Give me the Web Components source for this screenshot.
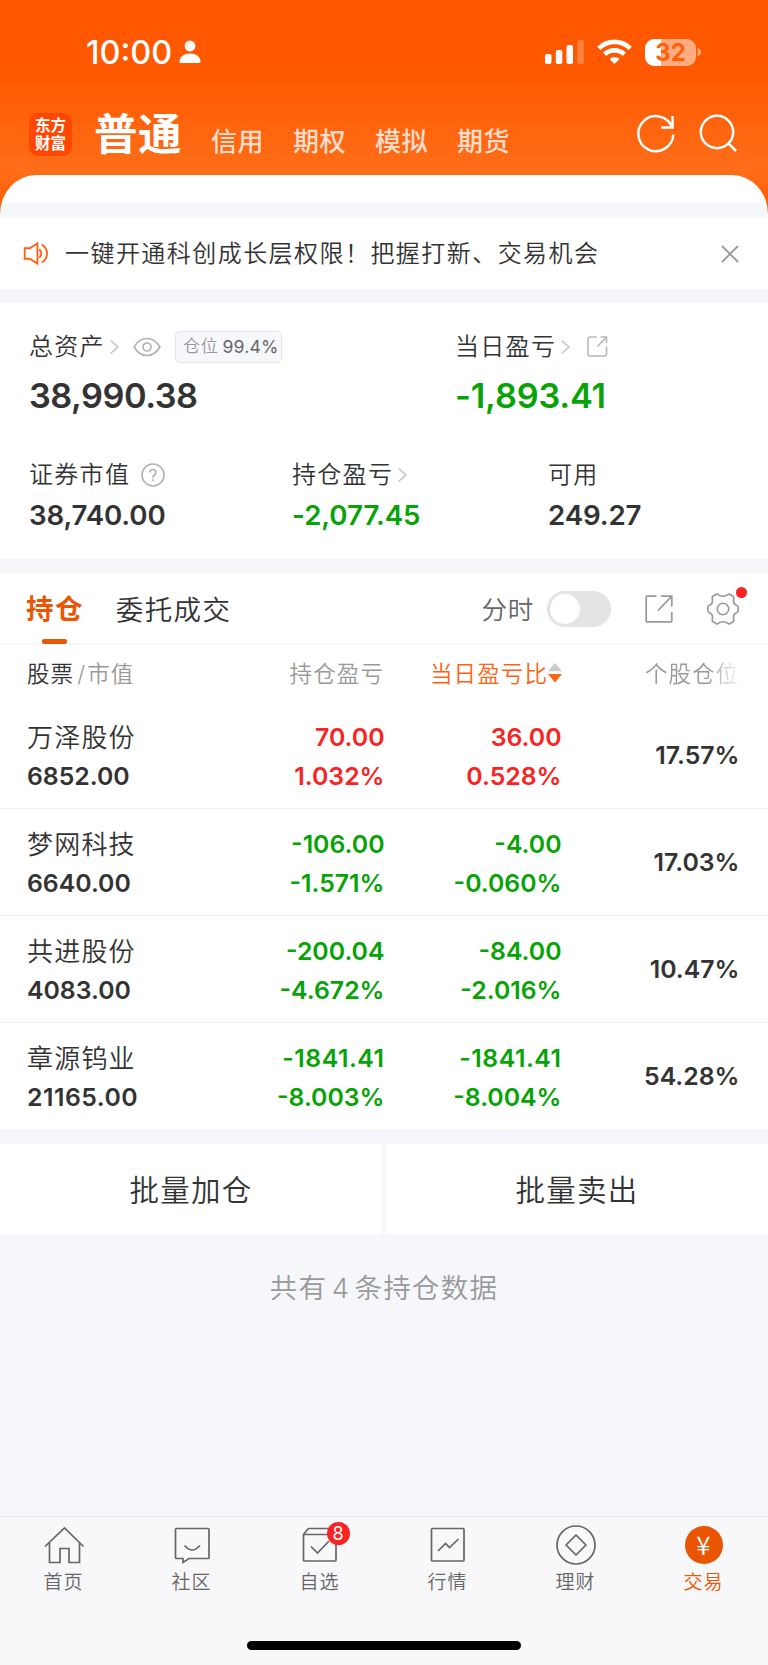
<!DOCTYPE html>
<html lang="zh-CN">
<head>
<meta charset="UTF-8">
<title>交易</title>
<style>
	:root {
		--brand: #ea5504;
		--ink: #333;
		--muted: #999;
		--up: #f82323;
		--down: #07a307;
		--gap: #f6f7fa;
	}
	body {
		margin: 0;
		width: 768px;
		height: 1665px;
		overflow: hidden;
		background: var(--gap);
		color: var(--ink);
		font-family: Inter, "Noto Sans CJK SC", sans-serif;
		font-weight: 350;
		white-space: nowrap;
	}
</style>
</head>
<body>
<trade-app></trade-app>

<script>
class BaseElement extends HTMLElement {
	constructor() {
		super();
		this.attachShadow({ mode: 'open' });
	}

	connectedCallback() {
		this.shadowRoot.innerHTML = `<style>* { box-sizing: border-box; } svg { display: block; flex: none; }</style>${this.render()}`;
	}
}

class StatusBar extends BaseElement {
	render() {
		return `
			<style>
				:host { display: flex; align-items: center; justify-content: space-between; height: 95px; padding: 9px 67px 0 86px; box-sizing: border-box; color: #fff; }
				.left, .right { display: flex; align-items: center; }
				.time { padding-top: 1px; font-size: 32.5px; line-height: 40px; font-weight: 500; letter-spacing: 0; width: 93px; }
				.battery { display: flex; align-items: center; justify-content: center; width: 51px; height: 27px; border-radius: 9px; margin-left: 13px;
					background: linear-gradient(90deg, #fff 16px, rgba(255, 255, 255, .5) 16px); color: #ff5f0a; font-size: 24px; line-height: 27px; font-weight: 700; }
			</style>
			<div class="left">
				<div class="time">10:00</div>
				<svg width="22" height="24" viewBox="0 0 22 24" fill="#fff"><circle cx="11" cy="6" r="5.4"/><path d="M.5 21.5C.5 17 5 13.5 11 13.5S21.500 17 21.500 21.500Q21.500 23 20 23H2Q.5 23 .5 21.500Z"/></svg>
			</div>
			<div class="right">
				<svg width="40" height="26" viewBox="0 0 40 26" fill="#fff"><rect y="15" width="6.500" height="10" rx="2"/><rect x="10.800" y="11" width="6.500" height="14" rx="2"/><rect x="21.500" y="6" width="6.500" height="19" rx="2"/><rect x="32.300" y="1" width="6.500" height="24" rx="2" opacity=".25"/></svg>
				<svg style="margin-left:12px" width="35" height="26" viewBox="0 0 35 26" fill="none" stroke="#fff" stroke-width="4.600"><path d="M1.800 9.300A22.500 22.500 0 0 1 33.200 9.300"/><path d="M7.700 15.300A14.200 14.200 0 0 1 27.300 15.300"/><path d="M17.500 25L12.500 20Q17.500 16 22.500 20Z" fill="#fff" stroke="none"/></svg>
				<div class="battery">32</div>
				<svg width="5" height="10" viewBox="0 0 5 10"><path d="M1.500 1Q5 2 5 5T1.500 9Z" fill="#fff" opacity=".5"/></svg>
			</div>
		`;
	}
}

class AccountTabs extends BaseElement {
	render() {
		return `
			<style>
				:host { display: flex; height: 80px; padding: 0 30px 0 29px; box-sizing: border-box; color: #fff; }
				.logo { width: 43px; height: 43px; margin-top: 18px; border-radius: 9px; background: #ff4703; display: grid; place-content: center; text-align: center; font-size: 15.5px; line-height: 17.500px; font-weight: 700; }
				.on { margin: 9px 0 0 22px; width: 117px; font-size: 43.5px; line-height: 60px; font-weight: 700; letter-spacing: .5px; }
				.tab { width: 82px; margin-top: 26px; font-size: 26px; line-height: 41px; font-weight: 500; letter-spacing: .5px; color: rgba(255, 255, 255, .8); }
				.icons { display: flex; gap: 22px; margin: 19px 0 0 auto; }
			</style>
			<div class="logo"><span>东方</span><span>财富</span></div>
			<div class="on">普通</div>
			${['信用', '期权', '模拟', '期货'].map((t) => `<div class="tab">${t}</div>`).join('')}
			<div class="icons">
				<svg width="40" height="40" viewBox="0 0 40 40" fill="none" stroke="#fff" stroke-width="2.500"><path d="M37.300 20.500A17.500 17.500 0 1 1 36.200 13.500"/><path d="M36.500 2V13.500H25"/></svg>
				<svg width="40" height="40" viewBox="0 0 40 40" fill="none" stroke="#fff" stroke-width="2.500"><circle cx="19" cy="18" r="16.200"/><path d="M30 29L38 37"/></svg>
			</div>
		`;
	}
}

class NoticeBar extends BaseElement {
	render() {
		return `
			<style>
				:host { display: flex; align-items: center; height: 71px; padding: 0 29px 0 23px; background: #fff; box-sizing: border-box; font-size: 24px; }
				.text { flex: 1; margin-left: 16px; letter-spacing: 1.45px; line-height: 36px; }
			</style>
			<svg width="26" height="23" viewBox="0 0 26 24" fill="none" stroke="#ff5f14" stroke-width="1.900"><path d="M1.200 6.500H6.500L14.500 1.500V22.500L6.500 17.500H1.200Z"/><path d="M16.500 7.500Q20.500 12 16.500 16.500M19 2.500Q24.500 6 24.500 12T19 21.500"/></svg>
			<div class="text"><slot></slot></div>
			<svg width="18" height="18" viewBox="0 0 18 18" stroke="#999" stroke-width="1.800"><path d="M1 1L17 17M17 1L1 17"/></svg>
		`;
	}
}

class AssetItem extends BaseElement {
	render() {
		const arrow = this.hasAttribute('arrow')
			? '<svg width="11" height="16" viewBox="0 0 11 16" fill="none" stroke="#c4c4c4" stroke-width="1.500"><path d="M1.500 1.500L9 8L1.500 14.500"/></svg>'
			: '';
		return `
			<style>
				:host { display: block; }
				.label { display: flex; align-items: center; height: 37px; font-size: 24px; line-height: 35px; letter-spacing: 1.300px; }
				.label svg { margin-left: 4px; }
				.value { font-size: 27.700px; line-height: 36px; font-weight: 600; margin-top: 4px; letter-spacing: -.15px; }
				:host([down]) .value { color: var(--down); letter-spacing: -.05px; }
				:host([large]) .value { font-size: 34.300px; line-height: 44px; margin-top: 9px; letter-spacing: -.5px; }
				:host([large][down]) .value { letter-spacing: -.2px; }
			</style>
			<div class="label"><span>${this.getAttribute('label')}</span>${arrow}<slot></slot></div>
			<div class="value">${this.getAttribute('value')}</div>
		`;
	}
}

class AssetSummary extends BaseElement {
	render() {
		return `
			<style>
				:host { display: block; height: 256px; padding: 25px 29px 0; background: #fff; box-sizing: border-box; }
				.top { display: grid; grid-template-columns: 426px 1fr; height: 128px; }
				.bottom { display: grid; grid-template-columns: 263px 256px 1fr; }
				.tag { display: flex; align-items: center; gap: 4px; margin-left: 14px; height: 32px; width: 107px; padding-left: 7px; border: 1px solid #e4e5e8; border-radius: 5px; background: #f7f8fb; font-size: 17px; letter-spacing: .8px; color: #999; }
				.tag b { font-weight: 400; font-size: 17.700px; letter-spacing: .1px; color: #666; }
			</style>
			<div class="top">
				<asset-item large arrow label="总资产" value="38,990.38">
					<svg style="margin-left:13px" width="28" height="20" viewBox="0 0 28 20" fill="none" stroke="#b2b2b2" stroke-width="1.700"><path d="M1.200 10Q6 1.500 14 1.500T26.800 10Q22 18.500 14 18.500T1.200 10Z"/><circle cx="14" cy="10" r="4"/></svg>
					<div class="tag">仓位<b>99.4%</b></div>
				</asset-item>
				<asset-item large arrow down label="当日盈亏" value="-1,893.41">
					<svg style="margin-left:16px" width="21" height="21" viewBox="0 0 21 21" fill="none" stroke="#b8b8b8" stroke-width="1.600"><path d="M10 1H3.500Q1 1 1 3.500V17.500Q1 20 3.500 20H17Q19.500 20 19.500 17.500V10.500M13.500 1H19.500V7M19.500 1L10.500 10.500"/></svg>
				</asset-item>
			</div>
			<div class="bottom">
				<asset-item label="证券市值" value="38,740.00">
					<svg style="margin-left:11px" width="24" height="24" viewBox="0 0 24 24" fill="none" stroke="#b2b2b2" stroke-width="1.600"><circle cx="12" cy="12" r="11"/><path d="M8.800 9.500Q9 6.500 12 6.500T15 9.300Q15 11 13.300 12T12 14.800"/><path d="M12 16.200V18" stroke-width="1.800"/></svg>
				</asset-item>
				<asset-item arrow down label="持仓盈亏" value="-2,077.45"></asset-item>
				<asset-item label="可用" value="249.27"></asset-item>
			</div>
		`;
	}
}

class PositionTabs extends BaseElement {
	render() {
		return `
			<style>
				:host { display: flex; align-items: center; height: 72px; padding: 0 29px 0 26px; background: #fff; border-bottom: 2px solid #f5f6f7; box-sizing: border-box; font-size: 27.500px; letter-spacing: 1.400px; }
				.on { position: relative; height: 100%; line-height: 72px; font-weight: 700; color: var(--brand); }
				.on::after { content: ""; position: absolute; left: 16px; bottom: -1px; width: 25px; height: 5px; border-radius: 2px; background: var(--brand); }
				.tab { margin-left: 32px; padding-bottom: 1px; }
				.label { margin-left: auto; padding-bottom: 2px; font-size: 25.500px; letter-spacing: .8px; color: #666; }
				.switch { width: 64px; height: 36px; margin: 0 34px 0 13px; padding: 3px; border-radius: 18px; background: #e4e4e6; }
				.switch i { display: block; width: 30px; height: 30px; border-radius: 50%; background: #fff; }
				.switch, .export, .gear { position: relative; top: .5px; }
				.gear { margin-left: 34px; }
				.gear i { position: absolute; right: -8px; top: -6px; width: 11px; height: 11px; border-radius: 50%; background: var(--up); }
			</style>
			<div class="on">持仓</div>
			<div class="tab">委托成交</div>
			<div class="label">分时</div>
			<div class="switch"><i></i></div>
			<svg class="export" width="28" height="28" viewBox="0 0 28 28" fill="none" stroke="#999" stroke-width="1.700"><path d="M11.500 1.200H2Q1.200 1.200 1.200 2V26Q1.200 26.800 2 26.800H26Q26.800 26.800 26.800 26V17M16 1.200H26.800V11.500M26.800 1.200L13 15.500"/></svg>
			<div class="gear">
				<svg width="32" height="32" viewBox="0 0 32 32" fill="none" stroke="#999" stroke-width="1.600"><path d="M9.200 1.300Q10.500 .8 11.200 1.700Q13 3.200 16 3.200T20.800 1.700Q21.500 .8 22.800 1.300L26 3.200Q27.200 4 26.700 5.500Q25.600 10.500 29.300 12.200Q31.200 12.800 31.200 14.200V17.800Q31.200 19.200 29.300 19.800Q25.600 21.500 26.700 26.500Q27.200 28 26 28.800L22.800 30.700Q21.500 31.200 20.800 30.300Q19 28.800 16 28.800T11.200 30.300Q10.500 31.200 9.200 30.700L6 28.800Q4.800 28 5.300 26.500Q6.400 21.500 2.700 19.800Q.8 19.200 .8 17.800V14.200Q.8 12.800 2.700 12.200Q6.400 10.500 5.300 5.500Q4.800 4 6 3.200Z"/><circle cx="16" cy="16" r="5.700"/></svg>
				<i></i>
			</div>
		`;
	}
}

class PositionHead extends BaseElement {
	render() {
		return `
			<style>
				:host { display: grid; grid-template-columns: 1fr 177px 177px 178px; align-items: center; height: 57px; padding: 0 29px 4px 27px; background: #fff; box-sizing: border-box; font-size: 22.500px; letter-spacing: 1.100px; color: var(--muted); text-align: right; }
				.name { text-align: left; }
				.name b { font-weight: 350; color: var(--ink); }
				.name span { margin: 0 1px 0 3px; }
				.sort { display: flex; align-items: center; justify-content: flex-end; color: #fa6414; margin-right: -1px; }
				.sort svg { margin-top: 2px; }
				.fade { margin-left: auto; -webkit-mask-image: linear-gradient(90deg, #000 65%, transparent 103%); width: 94px; overflow: hidden; text-align: left; }
			</style>
			<div class="name"><b>股票</b><span>/</span>市值</div>
			<div>持仓盈亏</div>
			<div class="sort">当日盈亏比<svg width="14" height="20" viewBox="0 0 14 20"><path d="M7 0L14 8.200H0Z" fill="#ccc"/><path d="M0 11H14L7 19.500Z" fill="#fa6414"/></svg></div>
			<div class="fade">个股仓位</div>
		`;
	}
}

class PositionRow extends BaseElement {
	render() {
		const get = (name) => this.getAttribute(name);
		return `
			<style>
				:host { display: grid; grid-template-columns: 1fr 177px 177px 178px; align-items: center; height: 107px; padding: 4px 28.500px 0 27px; background: #fff; border-bottom: 1px solid #f0f1f2; box-sizing: border-box; font-size: 24.800px; line-height: 39px; font-weight: 600; text-align: right; }
				.name { text-align: left; }
				.name p { margin: 0; font-size: 26px; font-weight: 350; letter-spacing: 1.200px; }
				.profit { color: var(--down); }
				.share { padding-bottom: 3px; }
				:host([up]) .profit { color: var(--up); }
				:host([wide]) span { letter-spacing: .5px; }
				:host(:last-of-type) { border-bottom: 0; height: 106px; }
			</style>
			<div class="name"><p>${get('name')}</p><span>${get('value')}</span></div>
			<div class="profit"><span>${get('total')}</span><br>${get('total-rate')}</div>
			<div class="profit"><span>${get('today')}</span><br>${get('today-rate')}</div>
			<div class="share">${get('share')}</div>
		`;
	}
}

class BatchActions extends BaseElement {
	render() {
		return `
			<style>
				:host { display: grid; grid-template-columns: 1fr 1fr; gap: 4px; margin-top: 15px; font-size: 29.500px; letter-spacing: 1.300px; line-height: 92px; text-align: center; }
				div { background: #fff; height: 90px; }
			</style>
			<div>批量加仓</div><div>批量卖出</div>
		`;
	}
}

const ICONS = {
	home: '<path d="M4 24.500L23.500 6L42.500 24.500M8.500 21V40.500H19V26.500H28V40.500H38.500V21"/>',
	chat: '<path d="M7.500 6.500H39Q40 6.500 40 7.500V35.500Q40 36.500 39 36.500H20L14 40.500V36.500H7.500Q6.500 36.500 6.500 35.500V7.500Q6.500 6.500 7.500 6.500Z"/><path d="M15.500 23.500Q23.200 32.500 31 23.500"/>',
	pick: '<path d="M6.500 12.500H39V38Q39 39 38 39H7.500Q6.500 39 6.500 38V12.500L10.500 7.500Q11.200 6.500 12.500 6.500H34L39 12.500"/><path d="M14 24.500L20.500 31L32 19"/>',
	market: '<rect x="6.500" y="6.500" width="32.500" height="32.500" rx="1"/><path d="M13 29L20.500 21.500L24.500 25.500L33.500 17"/>',
	wealth: '<circle cx="23" cy="23" r="19"/><path d="M23 13L33 23L23 33L13 23Z" stroke-linejoin="round"/>',
	trade: '<circle cx="23" cy="23" r="19" fill="#ea5504" stroke="none"/><text x="23" y="32.500" text-anchor="middle" font-family="Noto Sans CJK SC" font-size="26" fill="#fff" stroke="none">¥</text>',
};

class NavItem extends BaseElement {
	render() {
		const badge = this.getAttribute('badge');
		return `
			<style>
				:host { position: relative; display: flex; flex-direction: column; align-items: center; font-size: 19px; line-height: 30px; letter-spacing: 1px; color: #666; }
				:host([active]) { color: var(--brand); }
				i { position: absolute; left: 71px; top: 0; width: 23px; height: 23px; border-radius: 50%; background: var(--up); color: #fff; font-style: normal; font-weight: 400; font-size: 18px; line-height: 24px; letter-spacing: 0; text-align: center; }
			</style>
			<svg width="46" height="46" viewBox="0 0 46 46" fill="none" stroke="#666" stroke-width="1.700">${ICONS[this.getAttribute('icon')]}</svg>
			<slot></slot>
			${badge ? `<i>${badge}</i>` : ''}
		`;
	}
}

class BottomNav extends BaseElement {
	render() {
		return `
			<style>
				:host { display: flex; flex-direction: column; align-items: center; justify-content: space-between; height: 149px; padding: 5px 0 15px; background: #f8f8fb; border-top: 1px solid #e8e9eb; box-sizing: border-box; }
				nav { display: grid; grid-template-columns: repeat(6, 128px); margin-left: -1px; }
				.bar { width: 274px; height: 9px; border-radius: 5px; background: #000; }
			</style>
			<nav>
				<nav-item icon="home">首页</nav-item>
				<nav-item icon="chat">社区</nav-item>
				<nav-item icon="pick" badge="8">自选</nav-item>
				<nav-item icon="market">行情</nav-item>
				<nav-item icon="wealth">理财</nav-item>
				<nav-item icon="trade" active>交易</nav-item>
			</nav>
			<div class="bar"></div>
		`;
	}
}

class TradeApp extends BaseElement {
	render() {
		return `
			<style>
				:host { display: flex; flex-direction: column; height: 1665px; }
				.hero { background: linear-gradient(#ff5800 0, #ff5800 70px, #ff6d18 170px, #ff5800 218px); }
				.panel { height: 43px; border-radius: 36px 36px 0 0 / 39px 39px 0 0; background: linear-gradient(#fff 28px, var(--gap) 28px); }
				asset-summary { margin: 14px 0; }
				.total { margin-top: 34px; font-size: 27.500px; line-height: 40px; letter-spacing: 1.200px; word-spacing: -4.500px; text-align: center; color: var(--muted); }
				bottom-nav { margin-top: auto; }
			</style>
			<div class="hero">
				<status-bar></status-bar>
				<account-tabs></account-tabs>
				<div class="panel"></div>
			</div>
			<notice-bar>一键开通科创成长层权限！把握打新、交易机会</notice-bar>
			<asset-summary></asset-summary>
			<position-tabs></position-tabs>
			<position-head></position-head>
			<position-row up name="万泽股份" value="6852.00" total="70.00" total-rate="1.032%" today="36.00" today-rate="0.528%" share="17.57%"></position-row>
			<position-row name="梦网科技" value="6640.00" total="-106.00" total-rate="-1.571%" today="-4.00" today-rate="-0.060%" share="17.03%"></position-row>
			<position-row name="共进股份" value="4083.00" total="-200.04" total-rate="-4.672%" today="-84.00" today-rate="-2.016%" share="10.47%"></position-row>
			<position-row wide name="章源钨业" value="21165.00" total="-1841.41" total-rate="-8.003%" today="-1841.41" today-rate="-8.004%" share="54.28%"></position-row>
			<batch-actions></batch-actions>
			<div class="total">共有 4 条持仓数据</div>
			<bottom-nav></bottom-nav>
		`;
	}
}

customElements.define('status-bar', StatusBar);
customElements.define('account-tabs', AccountTabs);
customElements.define('notice-bar', NoticeBar);
customElements.define('asset-item', AssetItem);
customElements.define('asset-summary', AssetSummary);
customElements.define('position-tabs', PositionTabs);
customElements.define('position-head', PositionHead);
customElements.define('position-row', PositionRow);
customElements.define('batch-actions', BatchActions);
customElements.define('nav-item', NavItem);
customElements.define('bottom-nav', BottomNav);
customElements.define('trade-app', TradeApp);
</script>
</body>
</html>
